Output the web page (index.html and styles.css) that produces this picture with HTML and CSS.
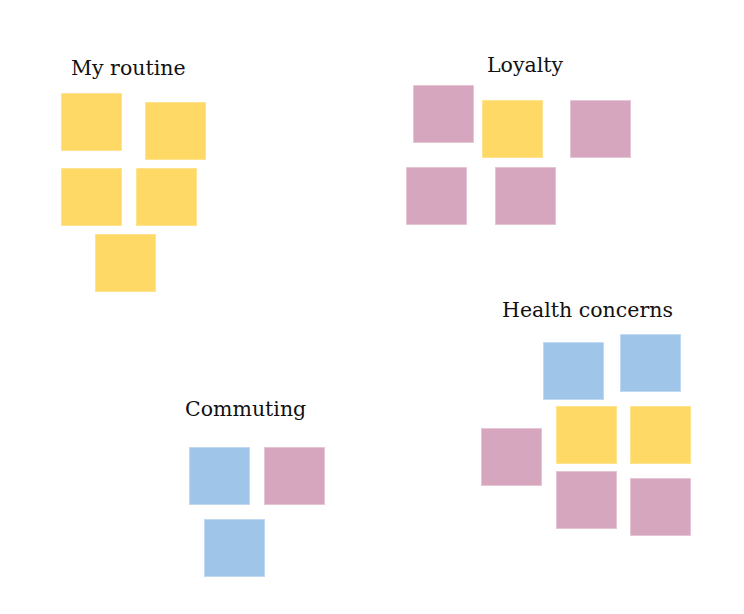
FILE: index.html
```html
<!DOCTYPE html>
<html lang="en">
<head>
<meta charset="utf-8">
<title>Affinity board</title>
<link rel="stylesheet" href="styles.css">
</head>
<body>
<div class="board">
  <div class="label" style="left:71px;top:58px">My routine</div>
  <div class="note yellow" style="left:61px;top:93px"></div>
  <div class="note yellow" style="left:145px;top:102px"></div>
  <div class="note yellow" style="left:61px;top:168px"></div>
  <div class="note yellow" style="left:136px;top:168px"></div>
  <div class="note yellow" style="left:95px;top:234px"></div>

  <div class="label" style="left:487px;top:55px">Loyalty</div>
  <div class="note pink" style="left:413px;top:85px"></div>
  <div class="note yellow" style="left:482px;top:100px"></div>
  <div class="note pink" style="left:570px;top:100px"></div>
  <div class="note pink" style="left:406px;top:167px"></div>
  <div class="note pink" style="left:495px;top:167px"></div>

  <div class="label" style="left:502px;top:300px">Health concerns</div>
  <div class="note blue" style="left:543px;top:342px"></div>
  <div class="note blue" style="left:620px;top:334px"></div>
  <div class="note yellow" style="left:556px;top:406px"></div>
  <div class="note yellow" style="left:630px;top:406px"></div>
  <div class="note pink" style="left:481px;top:428px"></div>
  <div class="note pink" style="left:556px;top:471px"></div>
  <div class="note pink" style="left:630px;top:478px"></div>

  <div class="label" style="left:185px;top:399px">Commuting</div>
  <div class="note blue" style="left:189px;top:447px"></div>
  <div class="note pink" style="left:264px;top:447px"></div>
  <div class="note blue" style="left:204px;top:519px"></div>
</div>
</body>
</html>
```

FILE: styles.css
```css
html, body {
  margin: 0;
  padding: 0;
  background: #ffffff;
}
.board {
  position: relative;
  width: 744px;
  height: 614px;
  overflow: hidden;
  background: #ffffff;
}
.label {
  position: absolute;
  font-family: "DejaVu Serif", "Liberation Serif", serif;
  font-size: 20.5px;
  line-height: 1;
  color: #111111;
  white-space: nowrap;
}
.note {
  position: absolute;
  width: 61px;
  height: 58px;
  box-sizing: border-box;
  border: 1px solid;
}
.yellow {
  background: #ffd966;
  border-color: #ffe391;
}
.pink {
  background: #d5a6bd;
  border-color: #e6c6d5;
}
.blue {
  background: #9fc5e8;
  border-color: #c0daf1;
}
```
